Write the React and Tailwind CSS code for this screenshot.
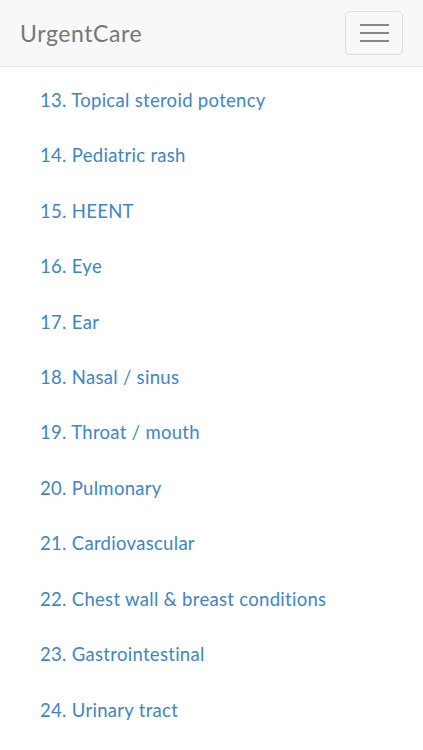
const items = [
  "13. Topical steroid potency",
  "14. Pediatric rash",
  "15. HEENT",
  "16. Eye",
  "17. Ear",
  "18. Nasal / sinus",
  "19. Throat / mouth",
  "20. Pulmonary",
  "21. Cardiovascular",
  "22. Chest wall & breast conditions",
  "23. Gastrointestinal",
  "24. Urinary tract",
];

export default function App() {
  return (
    <div className="w-[423px] h-[750px] overflow-hidden bg-white" style={{ fontFamily: "Lato, 'Open Sans', sans-serif" }}>
      <div className="h-[67px] bg-[#f8f8f8] border-b border-[#e7e7e7] flex items-center justify-between pl-5 pr-5">
        <span className="text-[23px] tracking-[0.6px] text-[#777]">UrgentCare</span>
        <button className="w-[58px] h-[44px] border border-[#ddd] rounded-[5px] flex flex-col items-center justify-center gap-[6px]">
          <span className="block w-[29px] h-[2px] bg-[#888]"></span>
          <span className="block w-[29px] h-[2px] bg-[#888]"></span>
          <span className="block w-[29px] h-[2px] bg-[#888]"></span>
        </button>
      </div>
      <ul className="pt-[6px] pl-10">
        {items.map((t) => (
          <li key={t} className="h-[55.45px] flex items-center text-[18.5px] tracking-[0.3px] text-[#3e86c4]">
            {t}
          </li>
        ))}
      </ul>
    </div>
  );
}
